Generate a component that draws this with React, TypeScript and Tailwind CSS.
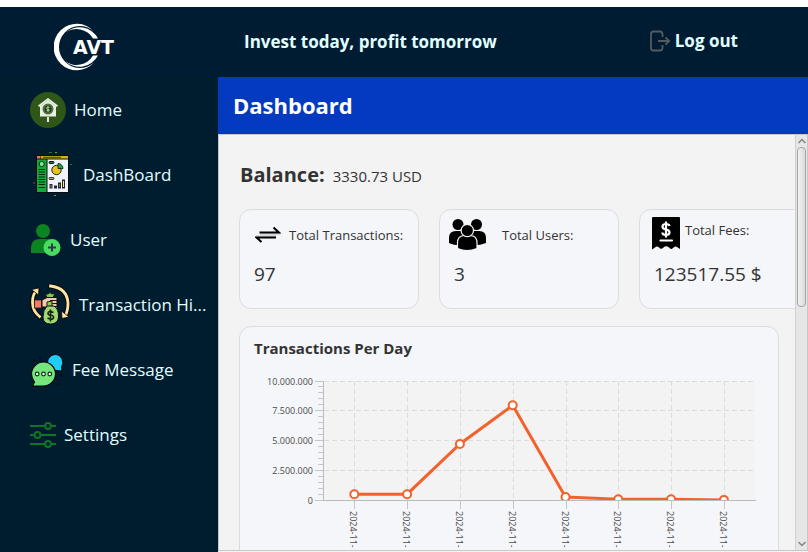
import type { ReactNode } from "react";

function Logo() {
  return (
    <svg width="68" height="60" viewBox="0 0 68 60" role="img" aria-label="AVT">
      <g fill="#fff">
        <path d="M40 19.400 A23.200 23.200 0 1 0 40 50.600 A21 21 0 1 1 40 19.400 Z" />
        <path d="M11 21 A21 21 0 0 1 44 26.500 L39 26.500 A19 19 0 0 0 11 21 Z" />
        <path d="M11 49 A21 21 0 0 0 44 43.500 L39 43.500 A19 19 0 0 1 11 49 Z" />
        <text x="19" y="42" className="font-['DejaVu_Sans',sans-serif] text-[19px] font-bold">
          AVT
        </text>
      </g>
    </svg>
  );
}

function HomeIcon() {
  return (
    <svg width="36" height="36" viewBox="0 0 36 36" aria-hidden="true">
      <circle cx="18" cy="18" r="18" fill="#2e5719" />
      <path d="M8 13.500 L18 6 L28 13.500 L27 15 L18 8.500 L9 15 Z" fill="#e9efe4" />
      <path d="M10 14 L18 8.500 L26 14 V24.500 H10 Z" fill="#e9efe4" />
      <circle cx="18" cy="17" r="5.500" fill="#527343" />
      <circle cx="18" cy="17" r="3.500" fill="#1e4210" />
      <path d="M19.500 15.500 Q16.500 14.500 16.500 16 T19.500 18 Q19.500 19.500 16.500 18.500 M18 14 V20" stroke="#cfdcc7" strokeWidth="0.800" fill="none" />
      <path d="M18 25 V30" stroke="#dfe8d9" strokeWidth="2" />
    </svg>
  );
}

function DashboardIcon() {
  return (
    <svg width="45" height="45" viewBox="0 0 45 45" aria-hidden="true">
      <rect x="6" y="3" width="33" height="38" rx="1" fill="#080d10" />
      <rect x="7" y="4" width="3.500" height="2.500" fill="#f06a7c" />
      <rect x="11" y="4" width="27" height="2.500" fill="#d8b217" />
      <path d="M13 5.300 H31" stroke="#443a09" strokeWidth="1" />
      <rect x="7" y="7.500" width="9.500" height="32.500" fill="#10ad3c" />
      <rect x="17.500" y="7.500" width="20.500" height="32.500" fill="#f1f3fc" />
      <circle cx="11.700" cy="12" r="2.600" fill="#74eb8c" stroke="#062a10" />
      <path d="M8.500 17.500 H15 M8.500 20 H15 M8.500 22.500 H15 M8.500 25 H15 M8.500 27.500 H15 M8.500 30 H15 M8.500 32.500 H15 M8.500 35.500 H15" stroke="#06280f" strokeWidth="1" />
      <circle cx="26.500" cy="18" r="4.700" fill="#e5c51b" stroke="#222" />
      <path d="M28 16.500 V11.500 A5 5 0 0 1 33 16.500 Z" fill="#1aa347" stroke="#173420" />
      <rect x="19" y="9.500" width="5" height="2" rx="1" fill="#188c39" stroke="#111" />
      <rect x="19" y="25.500" width="5" height="2" rx="1" fill="#dfa33a" stroke="#333" />
      <g stroke="#252331">
        <rect x="20" y="32.500" width="2" height="3.500" fill="#e26378" />
        <rect x="24.500" y="34" width="2" height="2" fill="#d9a339" />
        <rect x="28.500" y="31" width="2" height="5" fill="#8f8652" />
        <rect x="32.500" y="28" width="2" height="8" fill="#f4e38a" />
      </g>
      <path d="M19 .500 H22 M40 12.500 H42" stroke="#0d7d35" />
      <path d="M25 .500 H27 M24 43.500 H26" stroke="#a08f22" />
      <path d="M3 31 H5" stroke="#8c4654" />
    </svg>
  );
}

function UserIcon() {
  return (
    <svg width="32" height="32" viewBox="0 0 32 32" aria-hidden="true">
      <circle cx="13" cy="7" r="7" fill="#0d8220" />
      <path d="M1 29 V24 Q1 15 10 15 H16 Q23 15 24 20 V29 Z" fill="#0d8220" />
      <circle cx="22" cy="23.500" r="8.500" fill="#48dc61" />
      <path d="M22 19.500 V27.500 M18 23.500 H26" stroke="#30364f" strokeWidth="2" />
    </svg>
  );
}

function TransactionIcon() {
  return (
    <svg width="41" height="41" viewBox="0 0 41 41" aria-hidden="true">
      <g fill="none" strokeLinecap="square">
        <path d="M20.500 2 Q37 4 38 19 Q38 27 35 32 M9.500 32.500 Q2.500 27 2.500 18 Q2.500 10 7 6" stroke="#05080b" strokeWidth="5" />
        <path d="M20.500 2 Q37 4 38 19 Q38 27 35 32 M9.500 32.500 Q2.500 27 2.500 18 Q2.500 10 7 6" stroke="#ffe3a2" strokeWidth="2.800" />
      </g>
      <path d="M31.500 27 L32 34.500 L39 33 Z M1.500 5.500 L9 4 L8.500 11 Z" fill="#ffe3a2" stroke="#05080b" strokeWidth="0.800" />
      <path d="M16 12 Q15 9 18 10 Q20 7 22 10 Q25 8 24 12 L22 14 H18 Z" fill="#86c653" stroke="#0d190b" />
      <rect x="4.500" y="16" width="7" height="8" fill="#f47967" stroke="#151515" strokeWidth="0.700" />
      <path d="M12 16 L17 13.500 H27 V26 H21 L18 23 H12 Z" fill="#f4c9b3" stroke="#100c0b" />
      <path d="M20 16.500 H27 M20 19.500 H27 M20 22.500 H27" stroke="#191514" />
      <path d="M17 18 L22 17 L22 22 L17 23 Z" fill="#8dc75a" stroke="#17220f" />
      <path d="M17 22 H24 Q29 25 28.500 33 Q28 40 20.500 40 Q13 40 13 33 Q13 26 17 22 Z" fill="#a1d877" stroke="#0a120a" />
      <path d="M23.500 28.500 Q18 26 18 29.500 Q18 31 20.500 31 Q24 31.500 23.500 34 Q22 36.500 17.500 34 M20.500 25.500 V37.500" stroke="#14230d" strokeWidth="1.600" fill="none" />
    </svg>
  );
}

function MessageIcon() {
  return (
    <svg width="34" height="34" viewBox="0 0 34 34" aria-hidden="true">
      <path d="M25 1.500 A8 8 0 0 1 31.500 14 L32 18 L26 17.500 A8 8 0 1 1 25 1.500 Z" fill="#22ccfa" stroke="#02090c" />
      <path d="M13.500 9 A12 12 0 1 1 13.500 33 H2.500 L4.500 29 Q1.500 25 1.500 21 A12 12 0 0 1 13.500 9 Z" fill="#76e57b" stroke="#02090c" strokeWidth="1.200" />
      <g fill="#fff" stroke="#122d18" strokeWidth="1.200">
        <circle cx="7.200" cy="21" r="1.800" />
        <circle cx="13.500" cy="21" r="1.800" />
        <circle cx="19.800" cy="21" r="1.800" />
      </g>
      <path d="M9 4.500 H11 M3 7.500 H5 M30 22.500 H32 M27 31 H29" stroke="#02090c" strokeWidth="2" />
    </svg>
  );
}

function SettingsIcon() {
  return (
    <svg width="26" height="26" viewBox="0 0 26 26" fill="none" stroke="#0e7427" strokeWidth="2" aria-hidden="true">
      <path d="M0 4 H15 M21 4 H26 M0 13 H4.500 M10.500 13 H26 M0 22 H15 M21 22 H26" />
      <circle cx="18" cy="4" r="2.900" />
      <circle cx="7.500" cy="13" r="2.900" />
      <circle cx="18" cy="22" r="2.900" />
    </svg>
  );
}

function LogoutIcon() {
  return (
    <svg width="21" height="22" viewBox="0 0 21 22" fill="none" stroke="#565a5c" strokeWidth="1.800" aria-hidden="true">
      <path d="M12.500 7 V4 Q12.500 1.500 10 1.500 H3.500 Q1 1.500 1 4 V18 Q1 20.500 3.500 20.500 H10 Q12.500 20.500 12.500 18 V15 M8 11 H19 M15.500 7.500 L19.200 11 L15.500 14.500" />
    </svg>
  );
}

function TransferIcon() {
  return (
    <svg width="26" height="18" viewBox="0 0 26 18" aria-hidden="true">
      <path d="M5 8 H25 M1 10 H21" stroke="#bbb" strokeWidth="1" />
      <path d="M4.500 6.500 H24 L18.500 1.500 M21 11.500 H1.500 L6.500 16" stroke="#000" strokeWidth="2" fill="none" />
    </svg>
  );
}

function UsersIcon() {
  return (
    <svg width="38" height="32" viewBox="0 0 38 32" aria-hidden="true">
      <circle cx="10" cy="5.500" r="5.500" />
      <circle cx="28.500" cy="5.500" r="5.500" />
      <path d="M1 24 V19 Q1 12 8 12 H13 Q16 12 18 14 V26 Q7 27 1 24 Z M38 24 V19 Q38 12 31 12 H25 Q22 12 20 14 V26 Q31 27 38 24 Z" />
      <g stroke="#f4f6f9" strokeWidth="1.200">
        <path d="M9.500 29.500 V24 Q9.500 16.500 16.500 16.500 H22 Q29 16.500 29 24 V29.500 Q19 33.500 9.500 29.500 Z" />
        <circle cx="19.300" cy="11.500" r="6.200" />
      </g>
    </svg>
  );
}

function ReceiptIcon() {
  return (
    <svg width="28" height="34" viewBox="0 0 28 34" aria-hidden="true">
      <path d="M0 2 Q0 1 1 1 H27 Q28 1 28 2 V33 L25 31 Q23 29.500 21 32 Q19 34 17 31.500 Q14 29 11.500 31.500 Q9 34 7 31.500 Q5 29.500 3 31.500 L0 33.500 Z" />
      <path d="M17.500 10 Q17 8 14 8 Q10.500 8 10.500 10.500 Q10.500 13 14 13.500 Q17.500 14 17.500 16.500 Q17.500 19 14 19 Q10.500 19 10.300 16.500 M14 5.500 V21.500" fill="none" stroke="#fff" strokeWidth="2.200" />
      <path d="M8.500 24.500 H20" stroke="#fff" strokeWidth="2.200" strokeLinecap="round" />
    </svg>
  );
}

const navItems: { label: string; icon: ReactNode }[] = [
  { label: "Home", icon: <HomeIcon /> },
  { label: "DashBoard", icon: <DashboardIcon /> },
  { label: "User", icon: <UserIcon /> },
  { label: "Transaction Hi...", icon: <TransactionIcon /> },
  { label: "Fee Message", icon: <MessageIcon /> },
  { label: "Settings", icon: <SettingsIcon /> },
];

function StatCard({ icon, label, value, head }: { icon: ReactNode; label: string; value: string; head: string }) {
  return (
    <article className="h-[100px] w-[180px] shrink-0 rounded-xl border border-[#dadcde] bg-[#f4f6f9]">
      <div className={`flex h-[50px] ${head}`}>
        {icon}
        <h3 className="text-[13px] leading-5">{label}</h3>
      </div>
      <p className="pl-[14px] text-[19px] leading-7">{value}</p>
    </article>
  );
}

const axis = { left: 69.5, right: 502, top: 22.5, bottom: 141.5 };
const amounts = [530000, 530000, 4750000, 8000000, 300000, 110000, 110000, 50000];
const xAt = (i: number) => 100.3 + i * 52.8;
const yAt = (v: number) => axis.bottom - (v / 10000000) * (axis.bottom - axis.top);

function TransactionsChart() {
  const majors = [0, 2500000, 5000000, 7500000, 10000000];
  const minors = Array.from({ length: 21 }, (_, i) => i * 500000);
  const labels = ["0", "2.500.000", "5.000.000", "7.500.000", "10.000.000"];
  return (
    <svg viewBox="0 0 510 230" className="block h-auto w-full" role="img" aria-label="Transactions Per Day">
      <defs>
        <clipPath id="plot">
          <rect x="69" y="14" width="433" height="127" />
        </clipPath>
      </defs>
      <rect x="70" y="22" width="431" height="119" fill="#f3f3f3" />
      <g stroke="#dcdcdc" strokeDasharray="5 3">
        {majors.slice(1).map((v) => (
          <path key={v} d={`M70 ${Math.round(yAt(v)) - 0.5} H500`} />
        ))}
        {amounts.map((_, i) => (
          <path key={i} d={`M${Math.round(xAt(i)) + 0.5} 22 V141`} />
        ))}
      </g>
      <g stroke="#c4c6c8">
        {majors.map((v) => (
          <path key={v} d={`M61 ${Math.round(yAt(v)) - 0.5} H69`} />
        ))}
        {minors.map((v) => (
          <path key={v} d={`M64 ${Math.round(yAt(v)) - 0.5} H69`} />
        ))}
        {amounts.map((_, i) => (
          <path key={i} d={`M${Math.round(xAt(i)) + 0.5} 142 V150`} />
        ))}
        <path d="M69.500 22 V142 M69 141.500 H502" stroke="#b9bbbc" />
      </g>
      <g clipPath="url(#plot)">
        <polyline
          points={amounts.map((v, i) => `${xAt(i)},${yAt(v)}`).join(" ")}
          fill="none"
          stroke="#f3622d"
          strokeWidth="3"
        />
        {amounts.map((v, i) => (
          <circle key={i} cx={xAt(i)} cy={yAt(v)} r="4" fill="#fff" stroke="#f3622d" strokeWidth="2" />
        ))}
      </g>
      <g className="fill-[#4c4c4c] text-[9px]">
        {majors.map((v, i) => (
          <text key={v} x="59" y={Math.round(yAt(v)) + 3} textAnchor="end">
            {labels[i]}
          </text>
        ))}
        {amounts.map((_, i) => (
          <text key={i} transform={`translate(${Math.round(xAt(i)) - 4} 152) rotate(90)`}>
            2024-11-
          </text>
        ))}
      </g>
    </svg>
  );
}

function ScrollArrow({ d }: { d: string }) {
  return (
    <svg width="10" height="12" viewBox="0 0 10 12" fill="none" stroke="#858585" strokeWidth="1.500" aria-hidden="true">
      <path d={d} />
    </svg>
  );
}

export default function App() {
  return (
    <div className="flex h-screen flex-col overflow-hidden bg-white pt-[7px] font-['Open_Sans','Noto_Sans',sans-serif] text-[#333]">
      <header className="flex h-[70px] shrink-0 items-center bg-[#001c33] pr-[68px] text-[17px] font-bold text-[#e0ffff]">
        <div className="w-[218px] shrink-0 pl-[54px]">
          <Logo />
        </div>
        <p className="flex-1 pl-[26px]">Invest today, profit tomorrow</p>
        <button type="button" className="mb-0.5 flex items-center gap-1 pr-0.5">
          <LogoutIcon />
          Log out
        </button>
      </header>
      <div className="flex min-h-0 flex-1">
        <nav className="w-[218px] shrink-0 bg-[#001c2f] pl-[30px] text-[17px] text-[#e0ffff]">
          {navItems.map((item) => (
            <a key={item.label} href="#" className="flex h-[65px] items-center gap-2 whitespace-nowrap">
              {item.icon}
              {item.label}
            </a>
          ))}
        </nav>
        <main className="flex min-w-0 flex-1 flex-col bg-[#f3f3f3] pb-px">
          <h1 className="shrink-0 bg-[#033abf] px-[15px] py-[13px] text-[22px] leading-[31px] font-bold text-white">
            Dashboard
          </h1>
          <div className="flex min-h-0 flex-1 border border-[#c8c8c8]">
            <div className="min-w-0 flex-1 overflow-hidden pt-[26px] pl-5">
              <p className="flex h-7 items-baseline gap-2 pl-px">
                <strong className="text-[20px] leading-7">Balance:</strong>
                <span className="text-[15px]">3330.73 USD</span>
              </p>
              <section className="mt-5 flex gap-5">
                <StatCard icon={<TransferIcon />} label="Total Transactions:" value="97" head="items-center gap-2 pl-[15px]" />
                <StatCard icon={<UsersIcon />} label="Total Users:" value="3" head="items-center gap-4 pl-2" />
                <StatCard icon={<ReceiptIcon />} label="Total Fees:" value="123517.55 $" head="items-start gap-[5px] pt-[6px] pl-3 [&>h3]:pt-1" />
              </section>
              <section className="mt-[17px] mr-4 rounded-xl border border-[#dadcde] bg-[#f4f6f9] px-[14px] pt-[11px]">
                <h2 className="pb-px text-[15px] leading-5 font-bold">Transactions Per Day</h2>
                <TransactionsChart />
              </section>
            </div>
            <div className="flex w-3 shrink-0 flex-col items-center border-l border-[#d0d0d0] bg-[#e6e6e6]" aria-hidden="true">
              <ScrollArrow d="M1.500 8 L5 4.500 L8.500 8" />
              <div className="h-40 w-[9px] rounded-sm border border-[#a5a5a5] bg-linear-to-r from-[#f2f2f2] to-[#dadada]" />
              <div className="flex-1" />
              <ScrollArrow d="M1.500 4 L5 7.500 L8.500 4" />
            </div>
          </div>
        </main>
      </div>
    </div>
  );
}
